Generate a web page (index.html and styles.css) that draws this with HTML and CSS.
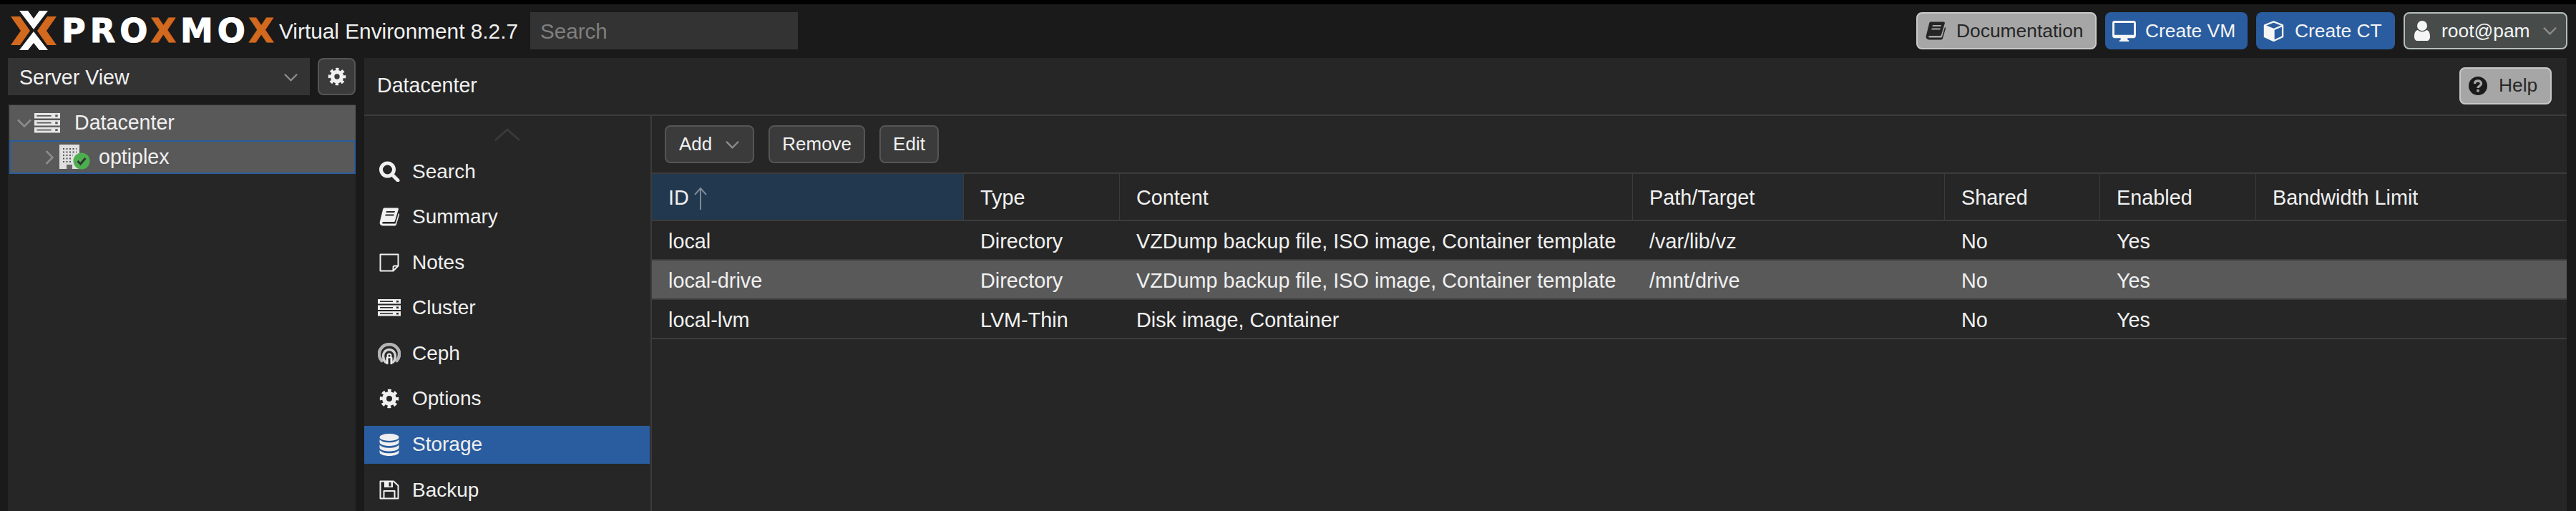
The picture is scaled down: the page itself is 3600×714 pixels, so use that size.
FILE: index.html
```html
<!DOCTYPE html>
<html>
<head>
    <meta charset="utf-8">
    <title>optiplex - Proxmox Virtual Environment</title>
    <link rel="stylesheet" href="styles.css">
</head>
<body>
    <svg class="sprite" xmlns="http://www.w3.org/2000/svg">
        <symbol id="i-search" viewBox="0 0 30 29">
            <circle cx="12.5" cy="12" r="9" fill="none" stroke="currentColor" stroke-width="5"/>
            <path d="M19 19l8 8" fill="none" stroke="currentColor" stroke-width="5" stroke-linecap="round"/>
        </symbol>
        <symbol id="i-book" viewBox="0 0 28 26">
            <path fill="currentColor" fill-rule="evenodd" d="M7 .5h18c1.6 0 2.2 1 1.8 2.3L22 18.500c-.3 1-1 1.500-2 1.500H6c-2 0-2.600 2.600-.6 2.600h16c.8 0 1.300-.4 1.600-1.200L27 8c1 .5 1.200 1.200 1 2l-4 13.500c-.3 1.200-1.200 2-2.500 2H5c-3 0-5-2.500-4.200-5.500L5 3c.3-1.500 1-2.500 2-2.500zM10 5l-.6 2h12l.6-2zM8.800 9.500l-.6 2h12l.6-2z"/>
        </symbol>
        <symbol id="i-note" viewBox="0 0 28 26">
            <path fill="none" stroke="currentColor" stroke-width="2" stroke-linejoin="round" d="M1.500 1.500h25v16l-7 7h-18zM26.500 17.500h-5a2 2 0 0 0-2 2v5"/>
        </symbol>
        <symbol id="i-server" viewBox="0 0 32 24" preserveAspectRatio="none">
            <path fill="currentColor" fill-rule="evenodd" d="M0 0h32v6.500H0zM3 2.500v1.500h18V2.500zM26 2v2.500h3V2zM0 8.500h32V15H0zM3 11v1.500h18V11zM26 10.500V13h3v-2.500zM0 17h32v6.500H0zM3 19.500V21h18v-1.500zM26 19v2.500h3V19z"/>
        </symbol>
        <symbol id="i-ceph" viewBox="0 0 32 30">
            <g fill="none" stroke="currentColor" stroke-linecap="round">
                <path stroke-width="4.500" opacity=".7" d="M5.500 25C1 20 1 13 4 8.500 9.500 0 22.500 0 28 8.500 31 13 31 20 26.500 25"/>
                <path stroke-width="3.500" opacity=".85" d="M10.500 27C6.500 22 7 15.500 9.500 12.500c3.500-4 9.500-4 13 0C25 15.500 25.500 22 21.500 27"/>
                <path stroke-width="3" d="M13 29v-8M19 29v-8"/>
                <circle cx="16" cy="18" r="2.500" stroke-width="2"/>
            </g>
        </symbol>
        <symbol id="i-cog" viewBox="0 0 28 28">
            <circle cx="14" cy="14" r="7" fill="none" stroke="currentColor" stroke-width="6"/>
            <circle cx="14" cy="14" r="11" fill="none" stroke="currentColor" stroke-width="4.500" stroke-dasharray="4.600 4.040" stroke-dashoffset="2.300"/>
        </symbol>
        <symbol id="i-database" viewBox="0 0 28 31">
            <g fill="currentColor">
                <ellipse cx="14" cy="5" rx="13.500" ry="5"/>
                <path d="M.5 8c2 2.800 7 4.300 13.500 4.300S25.500 10.800 27.500 8v4c0 2.800-6 5-13.500 5S.5 14.800.5 12z"/>
                <path d="M.5 15.500c2 2.800 7 4.300 13.500 4.300s11.500-1.500 13.500-4.300v4c0 2.800-6 5-13.500 5s-13.500-2.200-13.500-5z"/>
                <path d="M.5 23c2 2.800 7 4.300 13.500 4.300S25.500 25.800 27.500 23v3c0 2.800-6 5-13.500 5S.5 28.800.5 26z"/>
            </g>
        </symbol>
        <symbol id="i-floppy" viewBox="0 0 28 27">
            <g fill="none" stroke="currentColor" stroke-width="2" stroke-linejoin="round">
                <path d="M1.500 1.500H20l6.500 6v18h-25z"/>
                <path d="M6.500 25.500V15h15v10.500"/>
            </g>
            <path fill="currentColor" d="M7 1.500h12V10H7z"/>
            <path fill="#262626" d="M13.500 3h3v5.500h-3z"/>
        </symbol>
        <symbol id="i-desktop" viewBox="0 0 34 30">
            <path fill="currentColor" fill-rule="evenodd" d="M3 0h28c1.600 0 3 1.400 3 3v19c0 1.600-1.400 3-3 3h-9v2c0 1 1 1.500 2 1.500V30H10v-1.500c1 0 2-.5 2-1.500v-2H3c-1.600 0-3-1.400-3-3V3C0 1.400 1.400 0 3 0zM3 3v17.500h28V3z"/>
        </symbol>
        <symbol id="i-cube" viewBox="0 0 30 30">
            <path fill="none" stroke="currentColor" stroke-width="2.400" stroke-linejoin="round" d="M15 1.500l13 5v16.500l-13 6-13-6V6.500zM2 7l13 5.500L28 7M15 12.500V29"/>
            <path fill="currentColor" d="M2 7l13 5.500V29l-13-6z"/>
        </symbol>
        <symbol id="i-user" viewBox="0 0 22 28">
            <circle cx="11" cy="7" r="7" fill="currentColor"/>
            <path fill="currentColor" d="M5 13c3.500 3 8.500 3 12 0 3.500.5 5 4 5 9.500 0 3.500-2 5.500-4.500 5.500h-13C2 28 0 26 0 22.500 0 17 1.500 13.500 5 13z"/>
        </symbol>
        <symbol id="i-help" viewBox="0 0 26 26">
            <circle cx="13" cy="13" r="13" fill="currentColor"/>
            <path fill="none" stroke="#a6a6a6" stroke-width="3.400" d="M8.500 10c0-2.800 2-4 4.500-4s4.500 1.500 4.500 3.800c0 3.400-4.500 3.200-4.500 6.200"/>
            <path fill="#a6a6a6" d="M11.200 18h3.600v3.400h-3.600z"/>
        </symbol>
        <symbol id="i-down" viewBox="0 0 20 12">
            <path fill="none" stroke="currentColor" stroke-width="2.500" d="M1 1.500l9 9 9-9"/>
        </symbol>
    </svg>

    <div class="topbar">
        <svg class="logo-mark" viewBox="14 14 66 58">
            <path fill="#d2691e" d="M15 23h13l14 20-14 20H15l14-20zM79 23H66L52 43l14 20h13L65 43z"/>
            <path fill="#fff" d="M27 15h12l8 11 8-11h12L47 41zM27 70l20-26 20 26H55l-8-10-8 10z"/>
        </svg>
        <div class="logo-text">PRO<span class="logo-x">X</span>MO<span class="logo-x">X</span></div>
        <div class="version">Virtual Environment 8.2.7</div>
        <div class="search-field">Search</div>
        <div class="top-spacer"></div>
        <div class="btn btn-light btn-docs"><svg class="ico ico-book"><use href="#i-book"/></svg>Documentation</div>
        <div class="btn btn-blue btn-vm"><svg class="ico ico-desktop"><use href="#i-desktop"/></svg>Create VM</div>
        <div class="btn btn-blue btn-ct"><svg class="ico ico-cube"><use href="#i-cube"/></svg>Create CT</div>
        <div class="btn btn-user"><svg class="ico ico-user"><use href="#i-user"/></svg>root@pam<svg class="ico-down"><use href="#i-down"/></svg></div>
    </div>

    <div class="main">
        <div class="side">
            <div class="side-top">
                <div class="combo">Server View<svg class="ico-down"><use href="#i-down"/></svg></div>
                <div class="gear-btn"><svg class="ico-gear"><use href="#i-cog"/></svg></div>
            </div>
            <div class="tree">
                <div class="tree-row tree-dc">
                    <svg class="tree-arrow"><use href="#i-down"/></svg>
                    <svg class="tree-server"><use href="#i-server"/></svg>
                    <span class="tree-name">Datacenter</span>
                </div>
                <div class="tree-row tree-node">
                    <svg class="tree-arrow-right" viewBox="0 0 12 20"><path fill="none" stroke="currentColor" stroke-width="2.500" d="M1.500 1l9 9-9 9"/></svg>
                    <svg class="tree-host" viewBox="0 0 43 37">
                        <path fill="#e0e0e0" d="M0 1h28v34H0z"/>
                        <g fill="none" stroke="#555" stroke-width="2" stroke-dasharray="2 2.500">
                            <path d="M5 7h19M5 11.500h19M5 16h14M5 20.500h12M5 25h12"/>
                        </g>
                        <path fill="#666" d="M10 29h8v6h-8z"/>
                        <circle cx="31" cy="24" r="11.500" fill="#4cae4f"/>
                        <path fill="none" stroke="#333" stroke-width="3" d="M25.500 24l4 4 7-8"/>
                    </svg>
                    <span class="tree-name">optiplex</span>
                </div>
            </div>
        </div>

        <div class="panel">
            <div class="panel-head">
                <span>Datacenter</span>
                <div class="btn btn-light btn-help"><svg class="ico ico-help"><use href="#i-help"/></svg>Help</div>
            </div>
            <div class="panel-body">
                <div class="nav">
                    <div class="nav-scroll"><svg viewBox="0 0 36 18"><path fill="none" stroke="currentColor" stroke-width="2.500" d="M1 17L18 2l17 15"/></svg></div>
                    <div class="nav-item"><span class="nav-ico"><svg class="n-search"><use href="#i-search"/></svg></span>Search</div>
                    <div class="nav-item"><span class="nav-ico"><svg class="n-book"><use href="#i-book"/></svg></span>Summary</div>
                    <div class="nav-item"><span class="nav-ico"><svg class="n-note"><use href="#i-note"/></svg></span>Notes</div>
                    <div class="nav-item"><span class="nav-ico"><svg class="n-server"><use href="#i-server"/></svg></span>Cluster</div>
                    <div class="nav-item"><span class="nav-ico"><svg class="n-ceph"><use href="#i-ceph"/></svg></span>Ceph</div>
                    <div class="nav-item"><span class="nav-ico"><svg class="n-cog"><use href="#i-cog"/></svg></span>Options</div>
                    <div class="nav-item nav-active"><span class="nav-ico"><svg class="n-db"><use href="#i-database"/></svg></span>Storage</div>
                    <div class="nav-item"><span class="nav-ico"><svg class="n-floppy"><use href="#i-floppy"/></svg></span>Backup</div>
                </div>
                <div class="content">
                    <div class="toolbar">
                        <div class="tbtn tbtn-add">Add<svg class="ico-down"><use href="#i-down"/></svg></div>
                        <div class="tbtn">Remove</div>
                        <div class="tbtn">Edit</div>
                    </div>
                    <div class="grid-row grid-head">
                        <div class="cell cell-sorted">ID<svg class="sort-arrow" viewBox="0 0 20 32"><path fill="none" stroke="currentColor" stroke-width="2" d="M10 32V2M2 11l8-9 8 9"/></svg></div>
                        <div class="cell">Type</div>
                        <div class="cell">Content</div>
                        <div class="cell">Path/Target</div>
                        <div class="cell">Shared</div>
                        <div class="cell">Enabled</div>
                        <div class="cell">Bandwidth Limit</div>
                    </div>
                    <div class="grid-row">
                        <div class="cell">local</div>
                        <div class="cell">Directory</div>
                        <div class="cell">VZDump backup file, ISO image, Container template</div>
                        <div class="cell">/var/lib/vz</div>
                        <div class="cell">No</div>
                        <div class="cell">Yes</div>
                        <div class="cell"></div>
                    </div>
                    <div class="grid-row row-selected">
                        <div class="cell">local-drive</div>
                        <div class="cell">Directory</div>
                        <div class="cell">VZDump backup file, ISO image, Container template</div>
                        <div class="cell">/mnt/drive</div>
                        <div class="cell">No</div>
                        <div class="cell">Yes</div>
                        <div class="cell"></div>
                    </div>
                    <div class="grid-row">
                        <div class="cell">local-lvm</div>
                        <div class="cell">LVM-Thin</div>
                        <div class="cell">Disk image, Container</div>
                        <div class="cell"></div>
                        <div class="cell">No</div>
                        <div class="cell">Yes</div>
                        <div class="cell"></div>
                    </div>
                </div>
            </div>
        </div>
    </div>
</body>
</html>
```

FILE: styles.css
```css
html, body {
    height: 100%;
}
body {
    margin: 0;
    height: 714px;
    overflow: hidden;
    box-sizing: border-box;
    border-top: 6px solid #000;
    background-color: #1a1a1a;
    color: #f0f0f0;
    font-family: "Liberation Sans", Arial, sans-serif;
    font-size: 28.6px;
    display: flex;
    flex-direction: column;
}
.sprite {
    width: 0;
    height: 0;
    position: absolute;
}

/* top bar */
.topbar {
    height: 75px;
    flex: none;
    box-sizing: border-box;
    padding: 11px 12px 12px 14px;
    display: flex;
    align-items: stretch;
}
.logo-mark {
    width: 66px;
    height: 58px;
    margin-top: -3px;
    flex: none;
}
.logo-text {
    margin-left: 6px;
    width: 298px;
    font-family: "DejaVu Sans", sans-serif;
    font-weight: bold;
    font-size: 46px;
    letter-spacing: 6px;
    line-height: 52px;
    color: #fff;
    -webkit-text-stroke: 1px currentColor;
    white-space: nowrap;
}
.logo-x {
    color: #d2691e;
}
.version {
    margin-left: 6px;
    width: 351px;
    font-size: 29.8px;
    line-height: 54px;
    white-space: nowrap;
}
.search-field {
    width: 374px;
    box-sizing: border-box;
    padding-left: 14px;
    background-color: #333;
    color: #7f7f7f;
    font-size: 29.6px;
    line-height: 54px;
}
.top-spacer {
    flex: 1;
}
.btn {
    height: 52px;
    box-sizing: border-box;
    border-radius: 8px;
    margin-left: 12px;
    font-size: 26.4px;
    display: flex;
    align-items: center;
    white-space: nowrap;
}
.btn-light {
    background-color: #a6a6a6;
    border: 2px solid #c8c8c8;
    color: #262626;
}
.btn-blue {
    background-color: #2a5d9f;
    color: #f5f5f5;
}
.btn-docs {
    width: 252px;
    padding-left: 11px;
}
.btn-vm {
    width: 199px;
    padding-left: 10px;
}
.btn-ct {
    width: 194px;
    padding-left: 10px;
}
.btn-user {
    width: 229px;
    padding-left: 13px;
    background-color: #474c4b;
    border: 2px solid #b4bfba;
    color: #f5f5f5;
}
.btn-user .ico-down {
    margin-left: 18px;
}
.ico {
    flex: none;
    color: inherit;
}
.ico-book {
    width: 28px;
    height: 26px;
    margin-right: 15px;
}
.ico-desktop {
    width: 33px;
    height: 29px;
    margin-right: 13px;
}
.ico-cube {
    width: 29px;
    height: 29px;
    margin-right: 15px;
}
.ico-user {
    width: 22px;
    height: 28px;
    margin-right: 16px;
}
.ico-help {
    width: 26px;
    height: 26px;
    margin-right: 16px;
    color: #1a1a1a;
}
.ico-down {
    width: 19px;
    height: 12px;
    flex: none;
    color: #8c8c8c;
}

/* page columns */
.main {
    flex: 1;
    min-height: 0;
    padding: 0 13px 0 11px;
    display: grid;
    grid-template-columns: 486px 1fr;
    column-gap: 12px;
}

/* left side */
.side {
    display: flex;
    flex-direction: column;
    min-height: 0;
}
.side-top {
    height: 52px;
    flex: none;
    display: flex;
    justify-content: space-between;
}
.combo {
    width: 422px;
    box-sizing: border-box;
    padding: 2px 17px 0 16px;
    background-color: #333;
    display: flex;
    align-items: center;
    justify-content: space-between;
}
.gear-btn {
    width: 53px;
    box-sizing: border-box;
    background-color: #3b3b3b;
    border: 2px solid #555;
    border-radius: 8px;
    display: flex;
    align-items: center;
    justify-content: center;
}
.ico-gear {
    width: 26px;
    height: 28px;
}
.tree {
    flex: 1;
    margin-top: 12px;
    padding: 2px 0 0 2px;
    background-color: #262626;
}
.tree-row {
    display: flex;
    align-items: center;
    background-color: #595959;
    box-sizing: border-box;
}
.tree-dc {
    height: 49px;
}
.tree-node {
    height: 47px;
    border: 2px solid #2a5d9f;
}
.tree-arrow {
    width: 20px;
    height: 12px;
    margin-left: 11px;
    color: #8c8c8c;
}
.tree-server {
    width: 36px;
    height: 28px;
    margin-left: 4px;
    color: #e6e6e6;
}
.tree-dc .tree-name {
    margin-left: 20px;
}
.tree-arrow-right {
    width: 12px;
    height: 20px;
    margin-left: 48px;
    color: #8c8c8c;
}
.tree-host {
    width: 43px;
    height: 37px;
    margin-left: 8px;
}
.tree-node .tree-name {
    margin-left: 12px;
}

/* center panel */
.panel {
    background-color: #262626;
    display: flex;
    flex-direction: column;
    min-width: 0;
}
.panel-head {
    height: 81px;
    flex: none;
    box-sizing: border-box;
    padding: 0 21px 2px 18px;
    border-bottom: 2px solid #3c3c3c;
    display: flex;
    align-items: center;
    justify-content: space-between;
}
.btn-help {
    width: 129px;
    padding-left: 11px;
}
.panel-body {
    flex: 1;
    display: flex;
    min-height: 0;
}
.nav {
    width: 399px;
    flex: none;
    margin-right: 1px;
    font-size: 28px;
}
.nav-scroll {
    height: 51px;
    display: flex;
    justify-content: center;
    align-items: flex-start;
    color: #3b3b3b;
}
.nav-scroll svg {
    width: 36px;
    height: 18px;
    margin-top: 17px;
}
.nav-item {
    height: 53px;
    margin-bottom: 10.6px;
    padding-left: 19px;
    box-sizing: border-box;
    display: flex;
    align-items: center;
}
.nav-ico {
    width: 32px;
    margin-right: 16px;
    flex: none;
    display: flex;
    justify-content: center;
    align-items: center;
}
.n-search {
    width: 30px;
    height: 29px;
}
.n-book {
    width: 28px;
    height: 26px;
}
.n-note {
    width: 28px;
    height: 26px;
}
.n-server {
    width: 32px;
    height: 24px;
}
.n-ceph {
    width: 32px;
    height: 30px;
}
.n-cog {
    width: 28px;
    height: 28px;
}
.n-db {
    width: 28px;
    height: 31px;
}
.n-floppy {
    width: 28px;
    height: 27px;
}
.nav-active {
    background-color: #2a5d9f;
}

/* storage grid */
.content {
    flex: 1;
    min-width: 0;
    border-left: 2px solid #3c3c3c;
}
.toolbar {
    height: 81px;
    box-sizing: border-box;
    padding-left: 18px;
    border-bottom: 2px solid #3c3c3c;
    display: flex;
    align-items: center;
    gap: 20px;
}
.tbtn {
    height: 53px;
    box-sizing: border-box;
    padding: 0 17px;
    background-color: #3b3b3b;
    border: 2px solid #555;
    border-radius: 8px;
    font-size: 26px;
    display: flex;
    align-items: center;
}
.tbtn-add {
    padding-left: 18px;
    padding-right: 19px;
}
.tbtn .ico-down {
    margin-left: 19px;
}
.grid-row {
    height: 55px;
    box-sizing: border-box;
    border-bottom: 2px solid #3c3c3c;
    display: grid;
    grid-template-columns: 436px 218px 717px 436px 217px 218px 1fr;
}
.grid-head {
    height: 66px;
}
.cell {
    padding: 3px 0 0 23px;
    display: flex;
    align-items: center;
    white-space: nowrap;
    overflow: hidden;
    font-size: 28.8px;
}
.grid-head .cell {
    border-right: 1px solid #3c3c3c;
}
.grid-head .cell:last-child {
    border-right: 0;
}
.cell-sorted {
    background-color: #22384e;
}
.sort-arrow {
    width: 20px;
    height: 32px;
    margin-left: 6px;
    color: #7d8b98;
}
.row-selected {
    background-color: #595959;
}
```
